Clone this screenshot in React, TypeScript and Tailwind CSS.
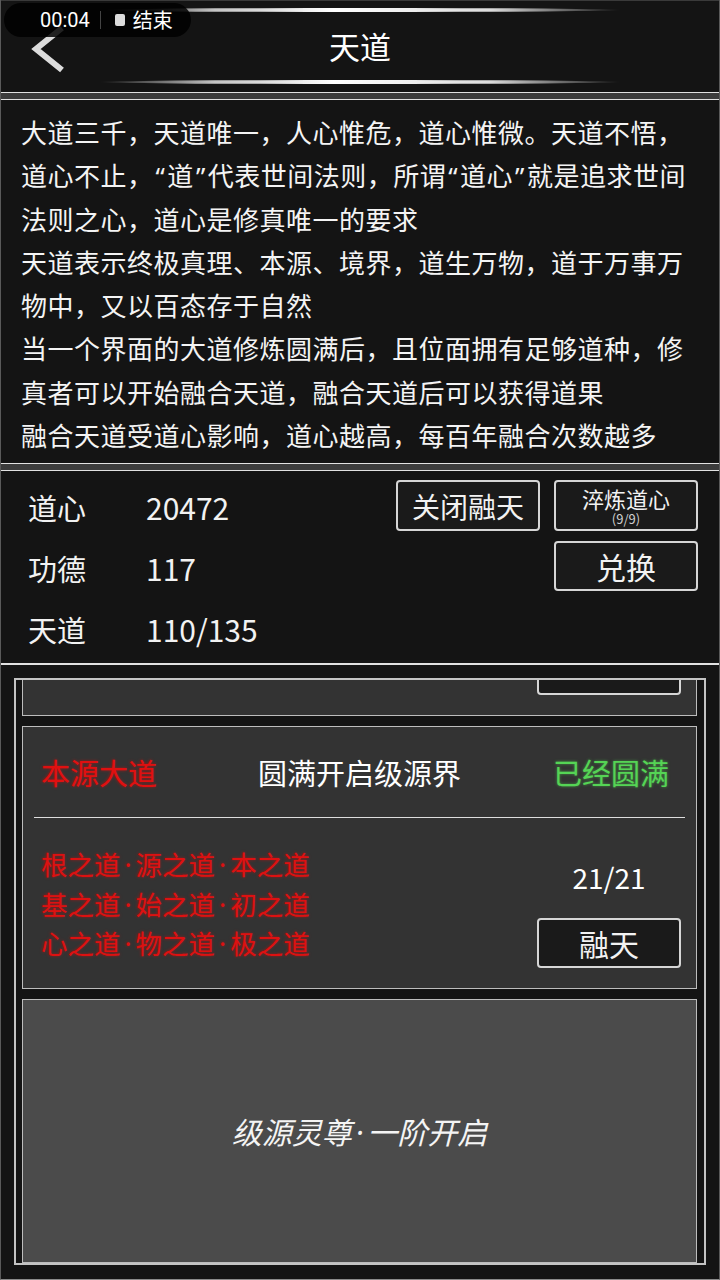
import React from "react";

const NARROW = new Set(["“", "”", "·"]);

// Render curly quotes and middle dots with a proportional Latin face (half-width), like the reference.
const T = ({ text }: { text: string }) => {
  const parts: React.ReactNode[] = [];
  let buf = "";
  let k = 0;
  for (const ch of text) {
    if (NARROW.has(ch)) {
      if (buf) parts.push(buf);
      buf = "";
      parts.push(
        <span
          key={k++}
          className={
            "font-['Noto_Sans',sans-serif] leading-none " + (ch === "·" ? "px-[4px]" : "px-[2px]")
          }
        >
          {ch}
        </span>
      );
    } else buf += ch;
  }
  if (buf) parts.push(buf);
  return <>{parts}</>;
};

const Sep = () => (
  <div className="h-[8px] shrink-0 bg-[#3c3c3c] border-y border-[#e2e2e2]" />
);

const GlowLine = () => (
  <div className="h-[4px] w-[520px] rounded-[50%] bg-[linear-gradient(90deg,rgba(255,255,255,0)_0%,rgba(255,255,255,0.75)_22%,#ffffff_45%,rgba(255,255,255,0.85)_75%,rgba(255,255,255,0)_100%)]" />
);

const Btn = ({ children, className = "" }: { children?: React.ReactNode; className?: string }) => (
  <div
    className={
      "flex flex-col items-center justify-center border-2 border-[#d6d6d6] rounded-[4px] bg-[#1a1a1a] text-[#f2f2f2] " +
      className
    }
  >
    {children}
  </div>
);

export default function App() {
  const intro = [
    "大道三千，天道唯一，人心惟危，道心惟微。天道不悟，道心不止，“道”代表世间法则，所谓“道心”就是追求世间法则之心，道心是修真唯一的要求",
    "天道表示终极真理、本源、境界，道生万物，道于万事万物中，又以百态存于自然",
    "当一个界面的大道修炼圆满后，且位面拥有足够道种，修真者可以开始融合天道，融合天道后可以获得道果",
    "融合天道受道心影响，道心越高，每百年融合次数越多",
  ];

  const redLines = ["根之道·源之道·本之道", "基之道·始之道·初之道", "心之道·物之道·极之道"];

  return (
    <div className="relative w-[720px] h-[1280px] overflow-hidden bg-[#141414] border-x border-[#5a5a5a] border-b border-b-[#8a8a8a] flex flex-col font-['Noto_Sans_CJK_SC','Noto_Sans',sans-serif] text-[#f2f2f2]">
      {/* Header */}
      <div className="h-[92px] shrink-0 flex flex-col items-center border-t border-[#3a3a3a]">
        <div className="mt-[7px]">
          <GlowLine />
        </div>
        <div className="flex-1 w-full grid grid-cols-[1fr_auto_1fr] items-center">
          <div className="pl-[29px] pt-[6px]">
            <svg width="38" height="48" viewBox="0 0 38 48" fill="none">
              <polyline
                points="32,3 6,24 32,45"
                stroke="#dcdcdc"
                strokeWidth="6"
                strokeLinecap="butt"
                strokeLinejoin="miter"
              />
            </svg>
          </div>
          <div className="text-[31px] leading-[40px] text-white">天道</div>
          <div />
        </div>
        <div className="mb-[8px]">
          <GlowLine />
        </div>
      </div>

      <Sep />

      {/* Intro text */}
      <div className="shrink-0 px-[20px] pt-[10px] pb-[7px] text-[26px] tracking-[0.5px] leading-[43.3px] text-[#f4f4f4]">
        {intro.map((p, i) => (
          <p key={i}>
            <T text={p} />
          </p>
        ))}
      </div>

      <Sep />

      {/* Stats */}
      <div className="shrink-0 h-[192px] flex justify-between pl-[27px] pr-[21px]">
        <div className="pt-[6px] flex flex-col">
          {[
            ["道心", "20472"],
            ["功德", "117"],
            ["天道", "110/135"],
          ].map(([k, v]) => (
            <div key={k} className="h-[61px] flex items-center text-[29px]">
              <span className="w-[118px]">{k}</span>
              <span className="text-[30px]">{v}</span>
            </div>
          ))}
        </div>
        <div className="pt-[9px] grid grid-cols-[144px_144px] grid-rows-[51px_50px] gap-x-[14px] gap-y-[10px] content-start">
          <Btn className="text-[28px] leading-[34px]">关闭融天</Btn>
          <Btn>
            <span className="text-[22px] leading-[26px]">淬炼道心</span>
            <span className="text-[13px] leading-[15px] text-[#cfcfcf]">(9/9)</span>
          </Btn>
          <div />
          <Btn className="text-[30px] leading-[36px]">兑换</Btn>
        </div>
      </div>

      <div className="h-[2px] shrink-0 bg-[#e2e2e2]" />

      {/* Bottom list */}
      <div className="flex-1 flex flex-col pt-[13px] px-[13px]">
        <div className="h-[587px] border-2 border-[#c4c4c4] overflow-hidden pl-[6px] pr-[7px] flex flex-col gap-[10px]">
          {/* Card 1 (scrolled, only bottom visible) */}
          <div className="mt-[-227px] h-[263px] shrink-0 bg-[#333333] border border-[#bdbdbd] flex flex-col justify-end items-end pr-[15px] pb-[20px]">
            <Btn className="w-[144px] h-[50px]" />
          </div>

          {/* Card 2 */}
          <div className="h-[263px] shrink-0 bg-[#333333] border border-[#bdbdbd] flex flex-col">
            <div className="h-[90px] grid grid-cols-[1fr_auto_1fr] items-center px-[18px] text-[29px] leading-[36px]">
              <span className="justify-self-start text-[#e01010] [text-shadow:0_0_3px_rgba(255,0,0,0.6)]">本源大道</span>
              <span className="text-white">圆满开启级源界</span>
              <span className="justify-self-end mr-[9px] text-[#55d455] [text-shadow:0_0_3px_rgba(80,220,80,0.6)]">已经圆满</span>
            </div>
            <div className="mx-[11px] h-px bg-[#dedede]" />
            <div className="flex-1 flex justify-between pl-[18px] pr-[15px]">
              <div className="pt-[26px] text-[26.5px] leading-[39.5px] text-[#dd1111] [text-shadow:0_0_3px_rgba(255,0,0,0.55)]">
                {redLines.map((l) => (
                  <div key={l}>
                    <T text={l} />
                  </div>
                ))}
              </div>
              <div className="w-[144px] flex flex-col items-center pt-[39px]">
                <div className="text-[28px] leading-[40px] text-white">21/21</div>
                <Btn className="mt-[21px] w-[144px] h-[50px] text-[30px] leading-[36px]">融天</Btn>
              </div>
            </div>
          </div>

          {/* Card 3 */}
          <div className="h-[264px] shrink-0 bg-[#4b4b4b] border border-[#bdbdbd] flex items-center justify-center">
            <span className="italic text-[30px] leading-[40px] text-[#f4f4f4]">
              <T text="级源灵尊·一阶开启" />
            </span>
          </div>
        </div>
      </div>

      {/* Screen recorder pill overlay */}
      <div className="absolute top-[3px] left-[3px] h-[34px] w-[187px] rounded-full bg-[rgba(0,0,0,0.85)] flex items-center">
        <span className="ml-[36px] font-['Roboto',sans-serif] text-[20px] leading-[24px] text-white">00:04</span>
        <span className="ml-[10px] h-[18px] w-px bg-[#444]" />
        <span className="ml-[14px] w-[10px] h-[12px] rounded-[2px] bg-[#dcdcdc]" />
        <span className="ml-[8px] text-[20px] leading-[24px] text-white">结束</span>
      </div>
    </div>
  );
}
